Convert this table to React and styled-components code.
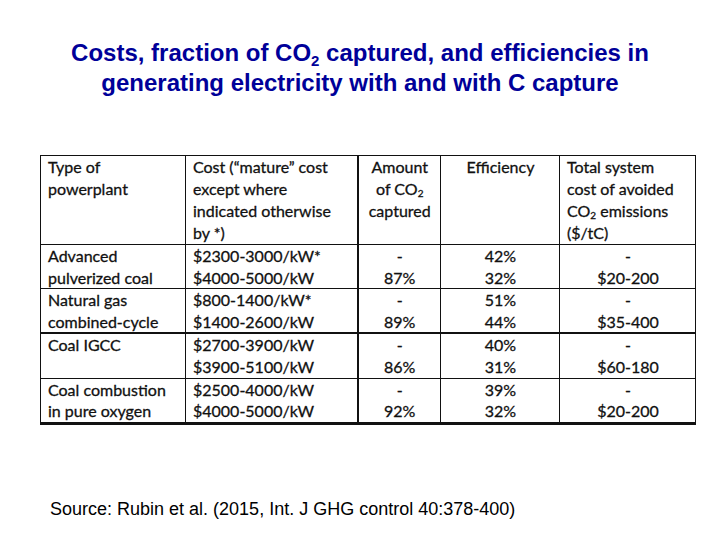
import React from "react";
import styled, { createGlobalStyle } from "styled-components";

const Global = createGlobalStyle`
  html, body { margin: 0; padding: 0; background: #fff; }
  body { width: 720px; height: 540px; overflow: hidden; }
`;

const Slide = styled.div`
  width: 720px;
  height: 540px;
  display: flex;
  flex-direction: column;
  box-sizing: border-box;
  padding-top: 38px;
  font-family: "Liberation Sans", Arial, sans-serif;
`;

const Title = styled.h1`
  margin: 0;
  text-align: center;
  color: #000099;
  font-size: 24px;
  font-weight: 700;
  line-height: 30px;
  sub { font-size: 15px; vertical-align: -5px; line-height: 0; }
`;

const TableWrap = styled.div`
  margin: 57px 0 0 40px;
`;

const Table = styled.table`
  border-collapse: collapse;
  font-family: Lato, "Open Sans", sans-serif;
  font-size: 16px;
  color: #111;
  line-height: 22px;
  -webkit-text-stroke: 0.3px #111;
  table-layout: fixed;
  width: 655px;
  border: 1px solid #111;
  border-bottom: 3px solid #111;
  sub { font-size: 10px; vertical-align: -2px; line-height: 0; }
`;

const Row = styled.tr`
  border-bottom: ${(p) => (p.$thick ? "2px" : "1px")} solid #111;
  line-height: ${(p) => (p.$head ? "22px" : "21.6px")};
`;

const Cell = styled.td`
  border-left: ${(p) => (p.$heavy ? "2px" : "1px")} solid #111;
  padding: 0 6px 0 7px;
  vertical-align: top;
  text-align: ${(p) => (p.$center ? "center" : "left")};
  white-space: nowrap;
`;

const Source = styled.div`
  margin: 74px 0 0 50px;
  font-size: 18px;
  color: #000;
`;

const rows = [
  { type: ["Advanced", "pulverized coal"], cost: ["$2300-3000/kW*", "$4000-5000/kW"], amount: "87%", eff: ["42%", "32%"], total: "$20-200" },
  { type: ["Natural gas", "combined-cycle"], cost: ["$800-1400/kW*", "$1400-2600/kW"], amount: "89%", eff: ["51%", "44%"], total: "$35-400", thick: true },
  { type: ["Coal IGCC", ""], cost: ["$2700-3900/kW", "$3900-5100/kW"], amount: "86%", eff: ["40%", "31%"], total: "$60-180" },
  { type: ["Coal combustion", "in pure oxygen"], cost: ["$2500-4000/kW", "$4000-5000/kW"], amount: "92%", eff: ["39%", "32%"], total: "$20-200" },
];

const Lines = ({ items }) => (
  <>
    {items.map((t, i) => (
      <div key={i}>{t || "\u00a0"}</div>
    ))}
  </>
);

export default function App() {
  return (
    <>
      <Global />
      <Slide>
        <Title>
          Costs, fraction of CO<sub>2</sub> captured, and efficiencies in
          <br />
          generating electricity with and with C capture
        </Title>
        <TableWrap>
          <Table>
            <colgroup>
              <col style={{ width: 145 }} />
              <col style={{ width: 172 }} />
              <col style={{ width: 83 }} />
              <col style={{ width: 119 }} />
              <col style={{ width: 136 }} />
            </colgroup>
            <tbody>
              <Row $head>
                <Cell>
                  <Lines items={["Type of", "powerplant"]} />
                </Cell>
                <Cell>
                  <Lines items={["Cost (\u201cmature\u201d cost", "except where", "indicated otherwise", "by *)"]} />
                </Cell>
                <Cell $center $heavy>
                  <div>Amount</div>
                  <div>of CO<sub>2</sub></div>
                  <div>captured</div>
                </Cell>
                <Cell $center>
                  <div>Efficiency</div>
                </Cell>
                <Cell>
                  <div>Total system</div>
                  <div>cost of avoided</div>
                  <div>CO<sub>2</sub> emissions</div>
                  <div>($/tC)</div>
                </Cell>
              </Row>
              {rows.map((r, i) => (
                <Row key={i} $thick={r.thick}>
                  <Cell>
                    <Lines items={r.type} />
                  </Cell>
                  <Cell>
                    <Lines items={r.cost} />
                  </Cell>
                  <Cell $center $heavy>
                    <Lines items={["-", r.amount]} />
                  </Cell>
                  <Cell $center>
                    <Lines items={r.eff} />
                  </Cell>
                  <Cell $center>
                    <Lines items={["-", r.total]} />
                  </Cell>
                </Row>
              ))}
            </tbody>
          </Table>
        </TableWrap>
        <Source>Source: Rubin et al. (2015, Int. J GHG control 40:378-400)</Source>
      </Slide>
    </>
  );
}
